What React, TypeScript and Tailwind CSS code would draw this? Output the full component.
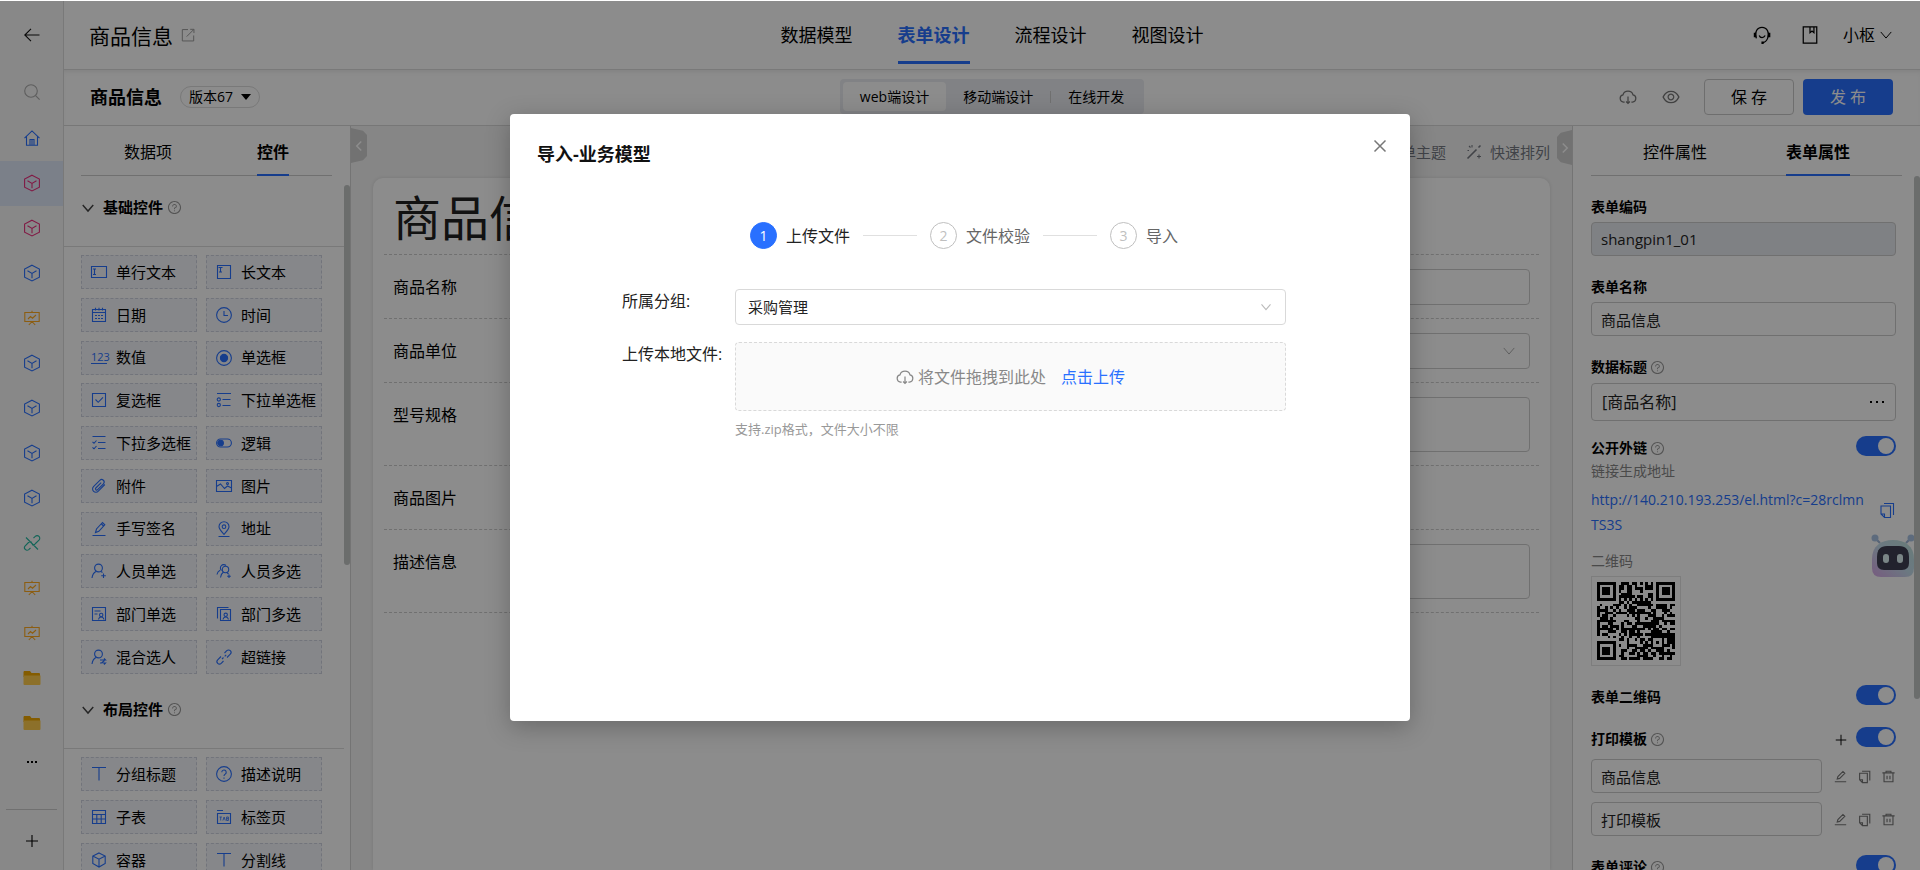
import React from "react";
import clsx from "clsx";
import { AiOutlineEye, AiOutlineQuestionCircle } from "react-icons/ai";

type IconProps = { name: string; className?: string };

// 16x16 line icons, drawn with currentColor
const icons: Record<string, React.ReactNode> = {
  back: <path d="M15.500 8H1M7 1.800 .8 8 7 14.200" />,
  search: (
    <>
      <circle cx="7" cy="7" r="6.300" />
      <path d="m11.600 11.600 4 4" />
    </>
  ),
  home: <path d="M.5 8.200 8 .9l7.500 7.300M2.500 6.500v8.800h11V6.500M6 15V9.500h4V15M8 9.500V15" />,
  cube: <path d="M8 .2 15.400 4v8.200L8 16 .6 12.200V4ZM3.500 5.800 8 8.400l4.500-2.600M8 8.400v4.800" />,
  board: <path d="M.8 2.500h14.400v9H.8ZM8 .8v1.700M4 9l2.500-2.500 2 1.700L12 5M8 11.500 4.800 15M8 11.500l3.200 3.500" />,
  unlink: <path d="m9.500 3 1.800-1.600a2.600 2.600 0 0 1 3.700 3.700L11.500 8.500M6.500 13l-1.800 1.600A2.600 2.600 0 0 1 1 11l3.500-3.500M2 2.500l12 12M4.500 7.500a2.600 2.600 0 0 1 3.500 0M8 9.500a2.600 2.600 0 0 0 3.500-1" />,
  plus: <path d="M8 2v12M2 8h12" />,
  down: <path d="m2 4.500 6 7 6-7" />,
  left: <path d="M11 2 5 8l6 6" />,
  right: <path d="m5 2 6 6-6 6" />,
  close: <path d="m2.500 2.500 11 11m0-11-11 11" />,
  external: <path d="M8 1.800H1.500v13h13V8.500M10.500 1.500h4.300v4.300M14.500 1.800 6.500 9.800" />,
  text: (
    <>
      <path d="M.5 2.500h15v11H.5Z" />
      <path d="M2 5h3M3.500 5v5.500M2 10.500h3" />
    </>
  ),
  longtext: (
    <>
      <path d="M1.500 1.500h13v13h-13Z" />
      <path d="M2.500 3.500h4M4.500 3.500V8M3 8h3" />
    </>
  ),
  date: <path d="M1.500 2.500h13v12h-13ZM1.500 5.500h13M4.500 .8v2.700M8 .8v2.700M11.500 .8v2.700M4 8.500h2M7 8.500h2M10 8.500h2M4 11.500h2M7 11.500h2M10 11.500h2" />,
  time: (
    <>
      <circle cx="8" cy="8" r="7.400" />
      <path d="M8 4v4.500h4" />
    </>
  ),
  radio: (
    <>
      <circle cx="8" cy="8" r="7.400" />
      <circle cx="8" cy="8" r="3.600" fill="currentColor" />
    </>
  ),
  checkbox: <path d="M1.500 1.500h13v13h-13ZM4.500 7.500l2.700 2.800L12 5.300" />,
  selectOne: (
    <>
      <path d="M1 1.500h14M6.500 7.500h8M6.500 13.500h8" />
      <circle cx="2.800" cy="7.500" r="1.600" />
      <circle cx="2.800" cy="13" r="1.600" />
    </>
  ),
  selectMany: <path d="M1.500 1.500h13M7 7.500h7.500M7 13.500h7.500M1.500 6.800 3 8.300 5.500 5.500M1.500 12.300 3 13.800 5.500 11" />,
  logic: (
    <>
      <rect x=".6" y="4" width="14.800" height="8" rx="4" />
      <circle cx="4.600" cy="8" r="2.800" fill="currentColor" />
    </>
  ),
  clip: <path d="m13.800 6.500-6.500 6.700a3.300 3.300 0 0 1-4.800-4.600l6.300-6.300a2.500 2.500 0 0 1 3.600 3.500l-5.800 5.900a1.200 1.200 0 0 1-1.800-1.700l5.400-5.400" />,
  image: (
    <>
      <path d="M.5 2.500h15v11H.5ZM.5 8.500 4.500 6l4 4.500 3-2.500 4 2" />
      <circle cx="11.500" cy="5.500" r="1" />
    </>
  ),
  sign: <path d="M1.500 14.500h13M4.500 11.500l1-3.500 6-6.500 2.300 2.300-6 6.500ZM10.500 3l2 2" />,
  place: (
    <>
      <path d="M8 13.300C5 10 3 8 3 5.700a5 5 0 0 1 10 0C13 8 11 10 8 13.300ZM2.500 15.500h11" />
      <circle cx="8" cy="5.700" r="1.800" />
    </>
  ),
  person: (
    <>
      <circle cx="7.500" cy="5" r="3.900" />
      <path d="M1 15c.5-3.500 2-5.500 4-6.500M10 8.500l1.500 1M12.500 10.500v4.500M10.200 12.800h4.600" />
    </>
  ),
  people: (
    <>
      <circle cx="9.500" cy="6.500" r="3.200" />
      <path d="M4.500 14.500c.5-3 1.500-4.500 3-5.500M5.500 7.500A3.200 3.200 0 1 1 10 2.500M1 11.500c.3-2 1.500-3.500 3-4.300M11 9.500l1.500 1.500M13 11.500v3.500M11.200 13.200h3.600" />
    </>
  ),
  dept: (
    <>
      <path d="M1.500 1.500h13v13h-13ZM3.500 5h6M3.500 8h3M7.500 13.500c.3-1.500 1.300-2.500 2.700-2.500s2.400 1 2.700 2.500" />
      <circle cx="10.200" cy="9" r="1.700" />
    </>
  ),
  depts: (
    <>
      <path d="M4.500 3.500h10v11h-10ZM12.500 1.500h-11v11M7 13.500c.3-1.500 1.300-2.500 2.700-2.500s2.400 1 2.700 2.500" />
      <circle cx="9.700" cy="8.800" r="1.700" />
    </>
  ),
  mixed: (
    <>
      <circle cx="7.500" cy="5" r="3.900" />
      <path d="M1 15c.5-3.500 2-5.500 4-6.500M9 11h5.500l-1.500-1.500M9 14h1.500l3-2.500M11.500 14h3L13 15.500" />
    </>
  ),
  link: <path d="m8.500 4 2.300-2.300a2.400 2.400 0 0 1 3.500 3.500L11 8.500M7.500 12l-2.300 2.300a2.400 2.400 0 0 1-3.500-3.500L5 7.500M6 10l1.500-1.500M8.700 7.300 10.200 5.800" />,
  title: <path d="M1 1.500h14M8 1.500v13" />,
  help: (
    <>
      <circle cx="8" cy="8" r="7.400" />
      <path d="M5.800 6.300a2.200 2.200 0 1 1 3.400 1.800C8.300 8.700 8 9 8 10M8 11.500v1.200" />
    </>
  ),
  table: <path d="M1.500 1.500h13v13h-13ZM1.500 5.500h13M1.500 10h13M5.800 5.500v9M10.200 5.500v9" />,
  tab: (
    <>
      <path d="M1 1.500h6M1.500 4.500h13v10h-13Z" />
      <path d="M3.500 8h2.400M4.700 8v3.500M6.900 11.500l1.200-3.500 1.200 3.500M10.600 8h1.800v3.500h-1.800ZM10.600 9.700h1.800" strokeWidth=".8" />
    </>
  ),
  box: <path d="M8 .9 14.200 4v7.500L8 15.100 1.800 11.500V4ZM1.800 4 8 7.200 14.200 4M8 7.200v7.900" />,
  wand: (
    <>
      <path d="m1.500 14.500 9-9M12.500 3.500l2-2" strokeWidth="1.600" />
      <path d="M6 1v2.500M1.500 6.500H3M3 2l1.500 1.500M13 10.500v4M11 12.500h4" />
    </>
  ),
  copy: <path d="M5 1.500h9.500V13M2 4h9.500v11.500h-6L2 12ZM2 12h3.500v3.500" />,
  edit: <path d="M1 14.500h14M4 11l.8-3 6.200-6.200 2.300 2.300L7 10.300Z" />,
  trash: <path d="M.5 3.500h15M5 3.500v-2h6v2M2.500 3.500v11h11v-11M6.200 7v4.500M9.800 7v4.500" />,
  headset: (
    <>
      <path d="M3 11C1 6 3.500 1.200 8 1.200S15 6 13 11c-.8 2-2 3.400-4.500 3.800M5.500 8.500c1 2.500 4 2.500 5.300 0" />
      <path d="M1.800 6v4M14.300 6v4M7.500 14.800h2" strokeWidth="2.200" />
    </>
  ),
  book: <path d="M2 .8h12v14.400H2ZM8 1v5l1.800-1.500L11.500 6V1" />,
  cloud: <path d="M5 12.500H4a3.200 3.200 0 0 1-.5-6.300 4.700 4.700 0 0 1 9 0 3.200 3.200 0 0 1-.5 6.300h-1M8 7.500v6M6.300 12 8 13.700 9.700 12" />,
};

const Icon = ({ name, className = "size-4" }: IconProps) => (
  <svg
    viewBox="0 0 16 16"
    fill="none"
    stroke="currentColor"
    strokeWidth="1.1"
    className={clsx("shrink-0 overflow-visible", className)}
    aria-hidden="true"
  >
    {icons[name]}
  </svg>
);

const Folder = () => (
  <svg viewBox="0 0 18 16" className="h-4 w-[18px]" aria-hidden="true">
    <path d="M1 1h6l1.500 2H16a1 1 0 0 1 1 1v3H.5V2Z" fill="#f0a800" />
    <path d="M.5 5.500h17V14a1 1 0 0 1-1 1h-15a1 1 0 0 1-1-1Z" fill="#ffcc4d" />
  </svg>
);

const sideItems = [
  { icon: "home", color: "text-[#2970ff]" },
  { icon: "cube", color: "text-[#eb2f7d]", active: true },
  { icon: "cube", color: "text-[#eb2f7d]" },
  { icon: "cube", color: "text-[#2970ff]" },
  { icon: "board", color: "text-[#ffaa1f]" },
  { icon: "cube", color: "text-[#2970ff]" },
  { icon: "cube", color: "text-[#2970ff]" },
  { icon: "cube", color: "text-[#2970ff]" },
  { icon: "cube", color: "text-[#2970ff]" },
  { icon: "unlink", color: "text-[#22b8a0]" },
  { icon: "board", color: "text-[#ffaa1f]" },
  { icon: "board", color: "text-[#ffaa1f]" },
  { icon: "folder", color: "" },
  { icon: "folder", color: "" },
];

const sections = [
  {
    title: "基础控件",
    grid: "h-[419px] content-between",
    items: [
      ["text", "单行文本"],
      ["longtext", "长文本"],
      ["date", "日期"],
      ["time", "时间"],
      ["number", "数值"],
      ["radio", "单选框"],
      ["checkbox", "复选框"],
      ["selectOne", "下拉单选框"],
      ["selectMany", "下拉多选框"],
      ["logic", "逻辑"],
      ["clip", "附件"],
      ["image", "图片"],
      ["sign", "手写签名"],
      ["place", "地址"],
      ["person", "人员单选"],
      ["people", "人员多选"],
      ["dept", "部门单选"],
      ["depts", "部门多选"],
      ["mixed", "混合选人"],
      ["link", "超链接"],
    ],
  },
  {
    title: "布局控件",
    grid: "gap-y-[9px]",
    items: [
      ["title", "分组标题"],
      ["help", "描述说明"],
      ["table", "子表"],
      ["tab", "标签页"],
      ["box", "容器"],
      ["title", "分割线"],
    ],
  },
];

const Sidebar = () => (
  <aside className="flex w-16 shrink-0 flex-col border-r border-[#dcdcdc] bg-[#f8f8f8]">
    <button aria-label="返回" className="flex h-[67px] shrink-0 items-center justify-center text-[#111]">
      <Icon name="back" />
    </button>
    <button aria-label="搜索" className="flex h-12 shrink-0 items-center justify-center text-[#aaa]">
      <Icon name="search" />
    </button>
    {sideItems.map((item, index) => (
      <button
        key={index}
        aria-label={item.icon}
        className={clsx(
          "flex h-[45px] shrink-0 items-center justify-center pb-px",
          item.color,
          item.active && "bg-[#e1e9fa]"
        )}
      >
        {item.icon === "folder" ? <Folder /> : <Icon name={item.icon} />}
      </button>
    ))}
    <button aria-label="更多" className="flex h-8 shrink-0 items-center justify-center gap-0.5">
      <i className="size-0.5 bg-black" />
      <i className="size-0.5 bg-black" />
      <i className="size-0.5 bg-black" />
    </button>
    <hr className="mx-1.5 mt-[31px] border-[#ccc]" />
    <button aria-label="新增" className="flex h-[61px] shrink-0 items-center justify-center text-black">
      <Icon name="plus" />
    </button>
  </aside>
);

const Header = () => (
  <header className="grid h-[69px] shrink-0 grid-cols-[1fr_auto_1fr] items-center border-b border-[#dcdcdc]">
    <div className="flex items-center gap-2 pl-[25px]">
      <h1 className="pt-0.5 text-[21px] leading-7">商品信息</h1>
      <Icon name="external" className="size-3.5 text-[#999]" />
    </div>
    <nav className="flex gap-[45px] self-start text-lg">
      {["数据模型", "表单设计", "流程设计", "视图设计"].map((label) => (
        <button
          key={label}
          className={clsx(
            "h-[63px] border-b-3 pt-2",
            label === "表单设计" ? "border-[#2970ff] font-bold text-[#2970ff]" : "border-transparent"
          )}
        >
          {label}
        </button>
      ))}
    </nav>
    <div className="flex items-center justify-end pr-[27px] text-base">
      <button aria-label="客服" className="mr-[30px]">
        <Icon name="headset" className="size-[18px]" />
      </button>
      <button aria-label="手册" className="mr-6">
        <Icon name="book" className="size-[18px]" />
      </button>
      <button className="flex items-center gap-1">
        小枢
        <Icon name="down" className="size-3.5" />
      </button>
    </div>
  </header>
);

const SubHeader = () => (
  <div className="grid h-14 shrink-0 grid-cols-[1fr_auto_1fr] items-center border-b border-[#d9d9d9] pb-0.5 shadow-[inset_0_4px_6px_-4px_rgba(0,0,0,0.12)]">
    <div className="flex items-center gap-[18px] pl-[26px]">
      <h2 className="text-lg font-bold">商品信息</h2>
      <button className="flex h-[22px] items-center gap-2 rounded-full border border-[#dcdcdc] px-2 text-sm">
        版本67
        <svg viewBox="0 0 10 6" className="h-1.5 w-2.5" aria-hidden="true">
          <path d="M0 0h10L5 6Z" />
        </svg>
      </button>
    </div>
    <div className="flex items-center rounded-sm bg-[#ebedf2] p-[3px] text-sm">
      <button className="h-[29px] rounded-sm bg-white px-[17px]">web端设计</button>
      <button className="h-[29px] px-[17px]">移动端设计</button>
      <span className="h-3 w-px bg-[#ccc]" />
      <button className="h-[29px] px-[17px]">在线开发</button>
    </div>
    <div className="flex items-center justify-end pr-[27px] text-base">
      <button aria-label="下载" className="mr-6 text-[#777]">
        <Icon name="cloud" className="size-[18px]" />
      </button>
      <button aria-label="预览" className="mr-[23px] text-[#777]">
        <AiOutlineEye className="size-5" />
      </button>
      <button className="mr-[9px] h-9 w-[90px] rounded-sm border border-[#c8c8c8]">保 存</button>
      <button className="h-9 w-[90px] rounded-sm bg-[#2970ff] text-white">发 布</button>
    </div>
  </div>
);

const Tabs = ({ items, active, className }: { items: string[]; active: string; className: string }) => (
  <div className={clsx("flex h-[50px] shrink-0 justify-center border-b border-[#ccc] text-base", className)}>
    {items.map((label) => (
      <button
        key={label}
        className={clsx(
          "-mb-px border-b-2 pt-1",
          label === active ? "border-[#2970ff] font-semibold" : "border-transparent"
        )}
      >
        {label}
      </button>
    ))}
  </div>
);

const WidgetPanel = () => (
  <section className="relative w-[287px] shrink-0 overflow-hidden border-r border-[#d4d4d4]">
    <Tabs items={["数据项", "控件"]} active="控件" className="mr-[18px] ml-[17px] gap-[85px]" />
    {sections.map((section) => (
      <div key={section.title}>
        <h3 className="mr-1.5 flex h-[71px] items-start gap-1 border-b border-[#dcdcdc] pt-[21px] pl-[17px] text-[15px] leading-5 font-semibold">
          <Icon name="down" className="mt-1 mr-1 size-3.5 stroke-[1.6] text-[#444]" />
          {section.title}
          <AiOutlineQuestionCircle className="mt-[3px] size-[15px] text-[#999]" />
        </h3>
        <div className={clsx("mt-2 mb-1 ml-[17px] grid grid-cols-[116px_116px] gap-x-[9px]", section.grid)}>
          {section.items.map(([icon, label]) => (
            <button
              key={label}
              className="flex h-[34px] items-center gap-[9px] border border-dashed border-[#cfd4e0] bg-[#f4f6fb] pl-[9px] text-[15px] whitespace-nowrap"
            >
              {icon === "number" ? (
                <span className="w-4 border-b border-[#2970ff] text-center text-[11px] leading-3 text-[#2970ff]">123</span>
              ) : (
                <Icon name={icon} className="size-4 text-[#2970ff]" />
              )}
              {label}
            </button>
          ))}
        </div>
      </div>
    ))}
    <div className="absolute top-[59px] right-0 h-[380px] w-1.5 rounded-full bg-[#c3c6c5]" />
  </section>
);

const rows = [
  { label: "商品名称", kind: "input", height: "h-16" },
  { label: "商品单位", kind: "select", height: "h-16" },
  { label: "型号规格", kind: "textarea", height: "h-[83px]" },
  { label: "商品图片", kind: "none", height: "h-16" },
  { label: "描述信息", kind: "textarea", height: "h-[83px]" },
];

const Canvas = () => (
  <main className="relative flex min-w-0 flex-1 flex-col bg-[#f5f5f5] px-[22px]">
    <div className="flex h-[52px] shrink-0 items-center justify-end gap-5 text-[15px] text-[#777b84]">
      <button>表单主题</button>
      <button className="flex items-center gap-2">
        <Icon name="wand" />
        快速排列
      </button>
    </div>
    <form className="flex-1 rounded-t-[10px] bg-white px-[11px] shadow-[0_0_4px_rgba(0,0,0,0.12)]">
      <h2 className="h-[77px] border-b border-dashed border-[#ccc] pl-[9px] text-5xl leading-[80px] text-[#222]">商品信息</h2>
      {rows.map((row) => (
        <div key={row.label} className={clsx("flex items-start border-b border-dashed border-[#ccc] px-[9px]", row.height)}>
          <label htmlFor={row.label} className="w-32 shrink-0 pt-5 text-base leading-6">
            {row.label}
          </label>
          {row.kind === "input" && <input id={row.label} className="mt-3.5 h-9 flex-1 rounded-sm border border-[#ccc]" />}
          {row.kind === "select" && (
            <div className="relative mt-3.5 flex flex-1">
              <select id={row.label} className="h-9 flex-1 appearance-none rounded-sm border border-[#ccc]" />
              <Icon name="down" className="absolute top-[11px] right-3.5 size-3.5 text-[#aaa]" />
            </div>
          )}
          {row.kind === "textarea" && (
            <textarea id={row.label} className="mt-3.5 h-[55px] flex-1 resize-none rounded-sm border border-[#ccc]" />
          )}
        </div>
      ))}
    </form>
    <button
      aria-label="收起左侧"
      className="absolute top-0.5 left-0 flex h-[35px] w-4 items-center justify-center bg-[#d0d0d0] text-white [clip-path:polygon(0_0,75%_8%,100%_20%,100%_80%,75%_92%,0_100%)]"
    >
      <Icon name="left" className="size-3 stroke-2" />
    </button>
    <button
      aria-label="收起右侧"
      className="absolute top-1 right-0 flex h-[35px] w-[15px] items-center justify-center bg-[#d0d0d0] text-white [clip-path:polygon(100%_0,25%_8%,0_20%,0_80%,25%_92%,100%_100%)]"
    >
      <Icon name="right" className="size-3 stroke-2" />
    </button>
  </main>
);

const QR_SIZE = 29;

const isDark = (x: number, y: number) => {
  for (const [fx, fy] of [[0, 0], [22, 0], [0, 22]]) {
    const dx = x - fx;
    const dy = y - fy;
    if (dx >= -1 && dx <= 7 && dy >= -1 && dy <= 7) {
      const ring = Math.max(Math.abs(dx - 3), Math.abs(dy - 3));
      return ring === 3 || ring <= 1;
    }
  }
  const align = Math.max(Math.abs(x - 22), Math.abs(y - 22));
  if (align <= 2) return align !== 1;
  if (x === 6 || y === 6) return (x + y) % 2 === 0;
  const n = Math.sin(x * 12.9898 + y * 78.233) * 43758.5453;
  return n - Math.floor(n) > 0.47;
};

const QrCode = () => {
  let path = "";
  for (let y = 0; y < QR_SIZE; y++) {
    for (let x = 0; x < QR_SIZE; x++) {
      if (isDark(x, y)) path += `M${x} ${y}h1v1h-1z`;
    }
  }
  return (
    <svg viewBox="0 0 29 29" className="size-[78px]" shapeRendering="crispEdges" role="img" aria-label="二维码">
      <path d={path} />
    </svg>
  );
};

const Robot = () => (
  <svg viewBox="0 0 44 46" className="absolute top-[407px] right-[5px] h-[46px] w-11" aria-hidden="true">
    <defs>
      <linearGradient id="shell" x1="0" y1="1" x2="1" y2="0">
        <stop offset="0" stopColor="#d9a6e8" />
        <stop offset=".5" stopColor="#c4dcec" />
        <stop offset="1" stopColor="#bfe3dc" />
      </linearGradient>
    </defs>
    <path d="M4 5l5 5M40 5l-5 5" stroke="#9db4d6" strokeWidth="2" />
    <circle cx="4" cy="5" r="3.500" fill="#a9c3e4" />
    <circle cx="40" cy="5" r="3.500" fill="#a9c3e4" />
    <path d="M1 26C1 13 10 7 22 7s21 6 21 19v9q0 9-9 9H10q-9 0-9-9Z" fill="url(#shell)" />
    <path d="M6 24q0-11 10-11h12q10 0 10 11v6q0 7-7 7H13q-7 0-7-7Z" fill="#3e3f52" />
    <rect x="12" y="21" width="6" height="9" rx="3" fill="#dff3f4" />
    <rect x="26" y="21" width="6" height="9" rx="3" fill="#dff3f4" />
  </svg>
);

const Switch = ({ label }: { label: string }) => (
  <input
    type="checkbox"
    role="switch"
    aria-label={label}
    defaultChecked
    className="flex h-5 w-10 shrink-0 appearance-none items-center justify-end rounded-full bg-[#2970ff] px-0.5 before:size-4 before:rounded-full before:bg-white before:content-['']"
  />
);

type SwitchRowProps = { title: string; help?: boolean; add?: boolean; className: string };

const SwitchRow = ({ title, help, add, className }: SwitchRowProps) => (
  <div className={clsx("flex h-6 items-start", className)}>
    <span className="flex items-center gap-[3px] pt-0.5 font-semibold">
      {title}
      {help && <AiOutlineQuestionCircle className="size-[15px] text-[#999]" />}
    </span>
    <span className="flex-1" />
    {add && (
      <button aria-label="新增模板" className="mt-1.5 mr-2">
        <Icon name="plus" className="size-3.5" />
      </button>
    )}
    <Switch label={title} />
  </div>
);

const field = "block h-[34px] w-full rounded-sm border border-[#ccc] px-[9px] text-[15px] text-[#222]";

const PropertyPanel = () => (
  <section className="relative w-[348px] shrink-0 overflow-hidden border-l border-[#d4d4d4]">
    <Tabs items={["控件属性", "表单属性"]} active="表单属性" className="mx-[18px] gap-[79px]" />
    <div className="pr-6 pl-[18px] text-sm leading-5">
      <label htmlFor="code" className="mt-[21px] mb-[5px] block font-semibold">
        表单编码
      </label>
      <input id="code" disabled defaultValue="shangpin1_01" className={clsx(field, "bg-[#e8ebf0]")} />
      <label htmlFor="name" className="mt-[21px] mb-[5px] block font-semibold">
        表单名称
      </label>
      <input id="name" defaultValue="商品信息" className={field} />
      <label htmlFor="title" className="mt-[21px] mb-1.5 flex items-center gap-[3px] font-semibold">
        数据标题
        <AiOutlineQuestionCircle className="size-[15px] text-[#999]" />
      </label>
      <div className="flex h-[38px] items-center rounded-sm border border-[#ccc] pr-[11px] pl-2.5">
        <input id="title" defaultValue="[商品名称]" className="min-w-0 flex-1 text-base text-[#222]" />
        <button aria-label="选择" className="flex gap-1">
          <i className="size-0.5 bg-black" />
          <i className="size-0.5 bg-black" />
          <i className="size-0.5 bg-black" />
        </button>
      </div>
      <SwitchRow title="公开外链" help className="mt-[15px]" />
      <p className="mt-px text-[#888]">链接生成地址</p>
      <div className="mt-1.5 flex items-center justify-between">
        <a href="#link" className="w-[276px] text-sm leading-[25px] break-all text-[#2970ff]">
          http://140.210.193.253/el.html?c=28rclmnTS3S
        </a>
        <button aria-label="复制" className="mr-px pb-1 text-[#2970ff]">
          <Icon name="copy" />
        </button>
      </div>
      <p className="mt-3.5 text-[#888]">二维码</p>
      <div className="mt-[5px] flex size-[90px] items-center justify-center border border-[#e4e4e4]">
        <QrCode />
      </div>
      <SwitchRow title="表单二维码" className="mt-[19px]" />
      <SwitchRow title="打印模板" help add className="mt-[18px]" />
      <div className="mt-2 flex flex-col gap-[9px]">
        {["商品信息", "打印模板"].map((label) => (
          <div key={label} className="flex items-center text-[#777]">
            <input aria-label={label} defaultValue={label} className={field} />
            <div className="flex gap-[11px] pr-px pl-3">
              <button aria-label="编辑">
                <Icon name="edit" className="size-[13px] stroke-[1.4]" />
              </button>
              <button aria-label="复制">
                <Icon name="copy" className="size-[13px] stroke-[1.4]" />
              </button>
              <button aria-label="删除">
                <Icon name="trash" className="size-[13px] stroke-[1.4]" />
              </button>
            </div>
          </div>
        ))}
      </div>
      <SwitchRow title="表单评论" help className="mt-[19px]" />
    </div>
    <Robot />
    <div className="absolute top-[50px] right-0 h-[523px] w-1.5 rounded-full bg-[#c3c6c5]" />
  </section>
);

const steps = ["上传文件", "文件校验", "导入"];

const ImportModal = () => (
  <div className="absolute inset-x-0 top-px bottom-0 flex items-start justify-center bg-black/45 pt-[113px]">
    <div
      role="dialog"
      aria-label="导入-业务模型"
      className="h-[607px] w-[900px] rounded bg-white px-[27px] pt-7 text-[#222] shadow-[0_6px_24px_rgba(0,0,0,0.25)]"
    >
      <div className="flex items-start justify-between">
        <h2 className="text-lg leading-6 font-bold text-[#111]">导入-业务模型</h2>
        <button aria-label="关闭" className="-mt-1 mr-[-5px] text-[#777]">
          <Icon name="close" className="size-4 stroke-[1.5]" />
        </button>
      </div>
      <ol className="mt-14 flex items-center justify-center gap-[13px] pl-2">
        {steps.map((step, index) => (
          <React.Fragment key={step}>
            {index > 0 && <li aria-hidden="true" className="h-px w-[54px] bg-[#e0e0e0]" />}
            <li className={clsx("flex items-center gap-[9px] text-base", index > 0 && "text-[#666]")}>
              <span
                className={clsx(
                  "flex size-[27px] items-center justify-center rounded-full border text-sm",
                  index === 0 ? "border-[#2970ff] bg-[#2970ff] text-white" : "border-[#bfbfbf] text-[#bfbfbf]"
                )}
              >
                {index + 1}
              </span>
              {step}
            </li>
          </React.Fragment>
        ))}
      </ol>
      <div className="mt-10 mr-[97px] ml-[85px] grid grid-cols-[113px_1fr] gap-y-[17px] text-base">
        <label htmlFor="group">所属分组:</label>
        <div className="relative flex">
          <select
            id="group"
            className="h-9 flex-1 appearance-none rounded border border-[#d9d9d9] px-3 text-[15px]"
          >
            <option>采购管理</option>
          </select>
          <Icon name="down" className="absolute top-3 right-3.5 size-3 stroke-[1.5] text-[#bbb]" />
        </div>
        <span>上传本地文件:</span>
        <div>
          <div className="flex h-[69px] items-center justify-center rounded border border-dashed border-[#d9d9d9] bg-[#fafafa] text-[#888]">
            <Icon name="cloud" className="mr-1 size-[18px]" />
            将文件拖拽到此处
            <button className="ml-[15px] text-[#2970ff]">点击上传</button>
          </div>
          <p className="mt-2 text-[13px] leading-5 text-[#999]">支持.zip格式，文件大小不限</p>
        </div>
      </div>
    </div>
  </div>
);

const App = () => {
  return (
    <div className="relative flex h-screen overflow-hidden bg-white pt-px font-['Open_Sans','Noto_Sans_CJK_SC',sans-serif] text-black">
      <Sidebar />
      <div className="flex min-w-0 flex-1 flex-col">
        <Header />
        <SubHeader />
        <div className="flex min-h-0 flex-1">
          <WidgetPanel />
          <Canvas />
          <PropertyPanel />
        </div>
      </div>
      <ImportModal />
    </div>
  );
};

export default App;
